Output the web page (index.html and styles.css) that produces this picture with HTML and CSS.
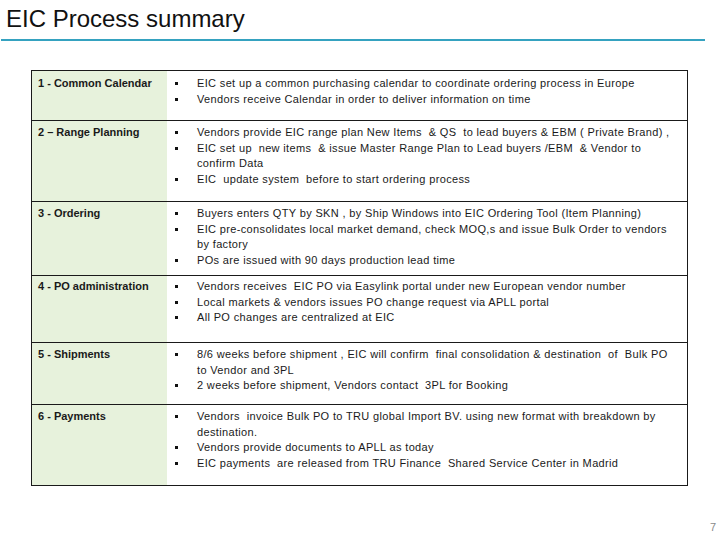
FILE: index.html
```html
<!DOCTYPE html>
<html lang="en">
<head>
<meta charset="utf-8">
<title>EIC Process summary</title>
<link rel="stylesheet" href="styles.css">
</head>
<body>
<header class="title-bar">
  <h1 class="title">EIC Process summary</h1>
</header>
<main class="summary">
  <div class="row r1">
    <div class="label">1 - Common Calendar</div>
    <ul class="items">
      <li>EIC set up a common purchasing calendar to coordinate ordering process in Europe</li>
      <li>Vendors receive Calendar in order to deliver information on time</li>
    </ul>
  </div>
  <div class="row r2">
    <div class="label">2 – Range Planning</div>
    <ul class="items">
      <li>Vendors provide EIC range plan New Items  &amp; QS  to lead buyers &amp; EBM ( Private Brand) ,</li>
      <li>EIC set up  new items  &amp; issue Master Range Plan to Lead buyers /EBM  &amp; Vendor to<br>confirm Data</li>
      <li>EIC  update system  before to start ordering process</li>
    </ul>
  </div>
  <div class="row r3">
    <div class="label">3 - Ordering</div>
    <ul class="items">
      <li>Buyers enters QTY by SKN , by Ship Windows into EIC Ordering Tool (Item Planning)</li>
      <li>EIC pre-consolidates local market demand, check MOQ,s and issue Bulk Order to vendors<br>by factory</li>
      <li>POs are issued with 90 days production lead time</li>
    </ul>
  </div>
  <div class="row r4">
    <div class="label">4 - PO administration</div>
    <ul class="items">
      <li>Vendors receives  EIC PO via Easylink portal under new European vendor number</li>
      <li>Local markets &amp; vendors issues PO change request via APLL portal</li>
      <li>All PO changes are centralized at EIC</li>
    </ul>
  </div>
  <div class="row r5">
    <div class="label">5 - Shipments</div>
    <ul class="items">
      <li>8/6 weeks before shipment , EIC will confirm  final consolidation &amp; destination  of  Bulk PO<br>to Vendor and 3PL</li>
      <li>2 weeks before shipment, Vendors contact  3PL for Booking</li>
    </ul>
  </div>
  <div class="row r6">
    <div class="label">6 - Payments</div>
    <ul class="items">
      <li>Vendors  invoice Bulk PO to TRU global Import BV. using new format with breakdown by<br>destination.</li>
      <li>Vendors provide documents to APLL as today</li>
      <li>EIC payments  are released from TRU Finance  Shared Service Center in Madrid</li>
    </ul>
  </div>
</main>
<footer class="page-num">7</footer>
</body>
</html>
```
FILE: styles.css
```css
html, body {
  margin: 0;
  padding: 0;
  background: #ffffff;
}
body {
  width: 720px;
  height: 540px;
  overflow: hidden;
  font-family: "Liberation Sans", Arial, sans-serif;
  color: #1a1a1a;
}
.title-bar {
  width: 704px;
  margin-left: 1px;
  padding: 5px 0 6px 0;
  border-bottom: 2px solid #35a2c0;
}
.title {
  margin: 0 0 0 5px;
  font-size: 24px;
  line-height: 28px;
  font-weight: normal;
  color: #111;
}
.summary {
  margin: 29px 0 0 31px;
  width: 655px;
  border: 1px solid #1a1a1a;
}
.row {
  display: flex;
}
.row + .row {
  border-top: 1px solid #1a1a1a;
}
.r1 { height: 49px; }
.r2 { height: 80px; }
.r3 { height: 73px; }
.r4 { height: 66px; }
.r5 { height: 61px; }
.r6 { height: 80px; }
.label {
  flex: none;
  width: 129px;
  padding: 4px 0 0 6px;
  background: #e7f2dc;
  font-size: 11px;
  line-height: 15.7px;
  font-weight: bold;
  white-space: nowrap;
}
.items {
  flex: 1;
  margin: 0;
  padding: 4px 0 0 0;
  list-style: none;
  font-size: 11px;
  line-height: 15.7px;
  letter-spacing: 0.35px;
}
.r1 .label, .r1 .items { padding-top: 5px; }
.r4 .label, .r4 .items { padding-top: 3px; }
.items li {
  display: flex;
  white-space: pre;
}
.items li::before {
  content: "";
  flex: none;
  width: 3px;
  height: 3px;
  margin: 6px 19px 0 8px;
  background: #111;
}
.page-num {
  margin-top: 34px;
  padding-right: 4px;
  text-align: right;
  font-size: 11px;
  line-height: 14px;
  color: #8a8a8a;
}
```
